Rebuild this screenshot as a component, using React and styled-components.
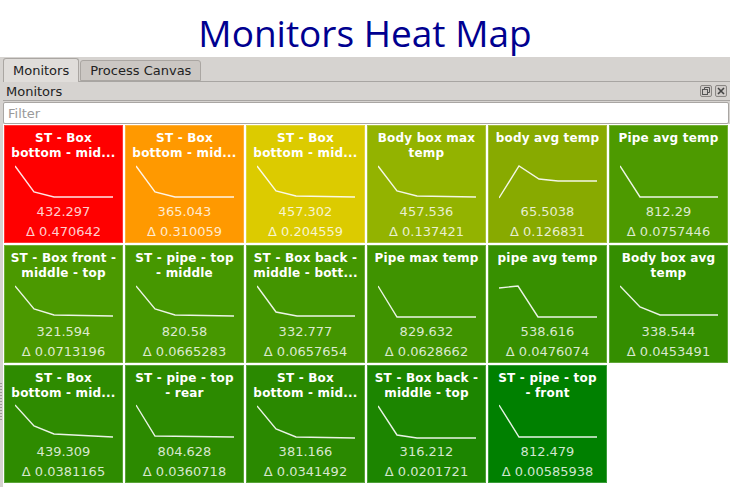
import styled, { createGlobalStyle } from 'styled-components';

const GlobalStyle = createGlobalStyle`
  html, body {
    margin: 0;
    padding: 0;
    background: #ffffff;
  }
  body {
    font-family: 'DejaVu Sans', 'Liberation Sans', sans-serif;
    font-size: 13px;
    color: #222;
  }
`;

const monitors = [
  { lines: ['ST - Box', 'bottom - mid...'], value: '432.297', delta: '0.470642', color: '#ff0000', pts: [[0, 1], [19, 27], [39, 32], [98, 32]] },
  { lines: ['ST - Box', 'bottom - mid...'], value: '365.043', delta: '0.310059', color: '#ff9900', pts: [[0, 1], [19, 27], [39, 32], [98, 32]] },
  { lines: ['ST - Box', 'bottom - mid...'], value: '457.302', delta: '0.204559', color: '#dccb00', pts: [[0, 1], [19, 26], [39, 31], [98, 32]] },
  { lines: ['Body box max', 'temp'], value: '457.536', delta: '0.137421', color: '#93b300', pts: [[0, 1], [19, 26], [39, 31], [98, 32]] },
  { lines: ['body avg temp'], value: '65.5038', delta: '0.126831', color: '#88aa00', pts: [[0, 33], [20, 1], [40, 14], [59, 16], [98, 16]] },
  { lines: ['Pipe avg temp'], value: '812.29', delta: '0.0757446', color: '#4d9a00', pts: [[0, 1], [20, 32], [98, 32]] },
  { lines: ['ST - Box front -', 'middle - top'], value: '321.594', delta: '0.0713196', color: '#4b9900', pts: [[0, 1], [19, 24], [39, 30], [98, 31]] },
  { lines: ['ST - pipe - top', '- middle'], value: '820.58', delta: '0.0665283', color: '#469700', pts: [[0, 1], [19, 24], [39, 30], [98, 31]] },
  { lines: ['ST - Box back -', 'middle - bott...'], value: '332.777', delta: '0.0657654', color: '#439500', pts: [[0, 1], [19, 27], [40, 31], [98, 31]] },
  { lines: ['Pipe max temp'], value: '829.632', delta: '0.0628662', color: '#3f9300', pts: [[0, 1], [19, 32], [98, 32]] },
  { lines: ['pipe avg temp'], value: '538.616', delta: '0.0476074', color: '#379000', pts: [[0, 3], [19, 1], [39, 32], [98, 32]] },
  { lines: ['Body box avg', 'temp'], value: '338.544', delta: '0.0453491', color: '#348e00', pts: [[0, 1], [20, 22], [40, 30], [98, 30]] },
  { lines: ['ST - Box', 'bottom - mid...'], value: '439.309', delta: '0.0381165', color: '#2e8b00', pts: [[0, 0], [19, 21], [39, 29], [98, 32]] },
  { lines: ['ST - pipe - top', '- rear'], value: '804.628', delta: '0.0360718', color: '#2c8a00', pts: [[0, 0], [19, 31], [98, 32]] },
  { lines: ['ST - Box', 'bottom - mid...'], value: '381.166', delta: '0.0341492', color: '#2a8900', pts: [[0, 1], [19, 24], [39, 32], [98, 33]] },
  { lines: ['ST - Box back -', 'middle - top'], value: '316.212', delta: '0.0201721', color: '#1c8500', pts: [[0, 1], [19, 30], [39, 33], [98, 33]] },
  { lines: ['ST - pipe - top', '- front'], value: '812.479', delta: '0.00585938', color: '#008000', pts: [[0, 0], [20, 32], [98, 32]] },
];

const Page = styled.div`
  width: 730px;
  height: 487px;
  overflow: hidden;
  background: #ffffff;
`;

const Title = styled.h1`
  margin: 0;
  height: 57px;
  display: flex;
  align-items: flex-end;
  justify-content: center;
  font-family: 'Open Sans', 'Noto Sans', sans-serif;
  font-weight: 400;
  font-size: 37px;
  line-height: 49px;
  color: #000090;
  letter-spacing: 0;
`;

const Window = styled.div`
  position: relative;
  background: #d6d3d0;
  padding-left: 3px;
`;

const SplitHandle = styled.div`
  position: absolute;
  left: 0;
  top: 325px;
  width: 2px;
  height: 40px;
  background-image: radial-gradient(circle, #9c9996 0.6px, transparent 0.8px);
  background-size: 2px 3px;
`;

const TabBar = styled.div`
  height: 25px;
  display: flex;
  align-items: flex-end;
  border-bottom: 1px solid #a8a5a2;
  box-sizing: border-box;
`;

const Tab = styled.div`
  height: ${(p) => (p.$active ? '24px' : '21px')};
  margin-bottom: ${(p) => (p.$active ? '-1px' : '0')};
  padding: 0 9px;
  display: flex;
  align-items: center;
  box-sizing: border-box;
  background: ${(p) => (p.$active ? '#e0ddda' : '#cbc7c3')};
  border: 1px solid #aaa6a2;
  border-bottom: ${(p) => (p.$active ? 'none' : '1px solid #aaa6a2')};
  border-radius: 3px 3px 0 0;
  margin-right: 1px;
  font-size: 13px;
  color: #222;
`;

const PanelHeader = styled.div`
  height: 18px;
  display: flex;
  align-items: center;
  justify-content: space-between;
  padding: 0 3px 0 3px;
  border-bottom: 1px solid #a8a5a2;
  font-size: 13px;
  color: #222;
`;

const HeaderButtons = styled.div`
  display: flex;
  gap: 3px;
`;

const HeaderButton = styled.div`
  width: 10px;
  height: 10px;
  border: 1px solid #8a8784;
  border-radius: 2px;
  background: #cfcbc8;
  display: flex;
  align-items: center;
  justify-content: center;
`;

const FilterBox = styled.div`
  padding: 1px 1px 0 0;
`;

const FilterInput = styled.input`
  display: block;
  width: 100%;
  height: 22px;
  box-sizing: border-box;
  border: 1px solid #a9a6a3;
  border-radius: 2px;
  background: #ffffff;
  padding: 0 4px;
  font-family: 'DejaVu Sans', sans-serif;
  font-size: 13px;
  outline: none;
  &::placeholder {
    color: #9a9a9a;
  }
`;

const Grid = styled.div`
  display: grid;
  grid-template-columns: repeat(6, 119px);
  grid-auto-rows: 118px;
  gap: 2px;
  padding: 1px 0 6px 1px;
  background: #ffffff;
`;

const Tile = styled.div`
  background: ${(p) => p.$color};
  box-shadow: inset 0 0 0 1px rgba(255, 255, 255, 0.22);
  display: flex;
  flex-direction: column;
  align-items: center;
  padding-top: 6px;
  box-sizing: border-box;
  overflow: hidden;
`;

const TileTitle = styled.div`
  height: 30px;
  font-weight: bold;
  font-size: 12px;
  line-height: 15px;
  letter-spacing: 0.2px;
  color: #ffffff;
  text-align: center;
  white-space: nowrap;
`;

const Spark = styled.svg`
  display: block;
  margin-top: 3px;
  width: 98px;
  height: 35px;
`;

const Reading = styled.div`
  margin-top: ${(p) => (p.$first ? '3px' : '0')};
  font-size: 13px;
  line-height: 20px;
  color: rgba(255, 255, 255, 0.82);
`;

const Sparkline = ({ pts }) => (
  <Spark viewBox="0 0 98 35">
    <polyline
      points={pts.map(([x, y]) => `${x},${y + 1}`).join(' ')}
      fill="none"
      stroke="rgba(255,255,255,0.9)"
      strokeWidth="1.4"
    />
  </Spark>
);

const App = () => {
  return (
    <>
      <GlobalStyle />
      <Page>
        <Title>Monitors Heat Map</Title>
        <Window>
          <SplitHandle />
          <TabBar>
            <Tab $active>Monitors</Tab>
            <Tab>Process Canvas</Tab>
          </TabBar>
          <PanelHeader>
            <span>Monitors</span>
            <HeaderButtons>
              <HeaderButton>
                <svg width="8" height="8" viewBox="0 0 8 8">
                  <rect x="0.5" y="2.5" width="5" height="5" fill="none" stroke="#555" />
                  <path d="M2.5 2.5V0.5H7.5V5.5H5.5" fill="none" stroke="#555" />
                </svg>
              </HeaderButton>
              <HeaderButton>
                <svg width="8" height="8" viewBox="0 0 8 8">
                  <path d="M1 1L7 7M7 1L1 7" stroke="#444" strokeWidth="1.6" />
                </svg>
              </HeaderButton>
            </HeaderButtons>
          </PanelHeader>
          <FilterBox>
            <FilterInput placeholder="Filter" />
          </FilterBox>
          <Grid>
            {monitors.map((m, i) => (
              <Tile key={i} $color={m.color}>
                <TileTitle>
                  {m.lines.map((l, j) => (
                    <div key={j}>{l}</div>
                  ))}
                </TileTitle>
                <Sparkline pts={m.pts} />
                <Reading $first>{m.value}</Reading>
                <Reading>Δ {m.delta}</Reading>
              </Tile>
            ))}
          </Grid>
        </Window>
      </Page>
    </>
  );
};

export default App;
